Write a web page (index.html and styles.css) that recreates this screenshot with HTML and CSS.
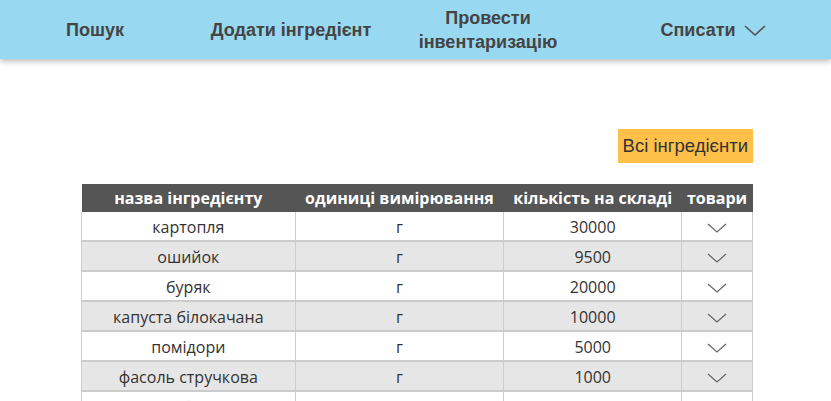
FILE: index.html
```html
<!DOCTYPE html>
<html lang="uk">
<head>
<meta charset="utf-8">
<link rel="stylesheet" href="styles.css">
</head>
<body>
<nav class="nav">
  <a class="nav-item i1">Пошук</a>
  <a class="nav-item i2">Додати інгредієнт</a>
  <a class="nav-item i3">Провести<br>інвентаризацію</a>
  <a class="nav-item i4">Списати
    <svg class="chev-nav" width="22" height="11" viewBox="0 0 22 11"><path d="M1 1 L11 10 L21 1" fill="none" stroke="#555" stroke-width="1.6"/></svg>
  </a>
</nav>
<main class="main">
  <div class="actions"><button class="btn">Всі інгредієнти</button></div>
  <table class="tbl">
    <colgroup><col class="c1"><col class="c2"><col class="c3"><col class="c4"></colgroup>
    <thead>
      <tr><th>назва інгредієнту</th><th>одиниці вимірювання</th><th>кількість на складі</th><th>товари</th></tr>
    </thead>
    <tbody>
      <tr><td>картопля</td><td>г</td><td>30000</td><td><svg class="chev" width="20" height="10" viewBox="0 0 20 10"><path d="M1 1 L10 9 L19 1" fill="none" stroke="#666" stroke-width="1.2"/></svg></td></tr>
      <tr><td>ошийок</td><td>г</td><td>9500</td><td><svg class="chev" width="20" height="10" viewBox="0 0 20 10"><path d="M1 1 L10 9 L19 1" fill="none" stroke="#666" stroke-width="1.2"/></svg></td></tr>
      <tr><td>буряк</td><td>г</td><td>20000</td><td><svg class="chev" width="20" height="10" viewBox="0 0 20 10"><path d="M1 1 L10 9 L19 1" fill="none" stroke="#666" stroke-width="1.2"/></svg></td></tr>
      <tr><td>капуста білокачана</td><td>г</td><td>10000</td><td><svg class="chev" width="20" height="10" viewBox="0 0 20 10"><path d="M1 1 L10 9 L19 1" fill="none" stroke="#666" stroke-width="1.2"/></svg></td></tr>
      <tr><td>помідори</td><td>г</td><td>5000</td><td><svg class="chev" width="20" height="10" viewBox="0 0 20 10"><path d="M1 1 L10 9 L19 1" fill="none" stroke="#666" stroke-width="1.2"/></svg></td></tr>
      <tr><td>фасоль стручкова</td><td>г</td><td>1000</td><td><svg class="chev" width="20" height="10" viewBox="0 0 20 10"><path d="M1 1 L10 9 L19 1" fill="none" stroke="#666" stroke-width="1.2"/></svg></td></tr>
      <tr><td>цибуля</td><td>г</td><td>3000</td><td><svg class="chev" width="20" height="10" viewBox="0 0 20 10"><path d="M1 1 L10 9 L19 1" fill="none" stroke="#666" stroke-width="1.2"/></svg></td></tr>
    </tbody>
  </table>
</main>
</body>
</html>
```
FILE: styles.css
```css
html, body {
  margin: 0;
  padding: 0;
  background: #fff;
}
body {
  font-family: "Liberation Sans", Arial, sans-serif;
  overflow: hidden;
}
.nav {
  height: 59px;
  background: #98d8f0;
  box-shadow: 0 2px 6px rgba(0,0,0,0.3);
  display: flex;
  align-items: center;
  padding-left: 20px;
  position: relative;
}
.nav-item {
  font-weight: bold;
  font-size: 18px;
  line-height: 24px;
  color: #444;
  display: flex;
  align-items: center;
  justify-content: center;
  text-align: center;
  gap: 6px;
}
.i1 { width: 150px; }
.i2 { width: 200px; margin-left: 21px; }
.i3 { width: 180px; margin-left: 7px; }
.i4 { width: 120px; margin-left: 75px; }
.chev-nav {
  margin-top: 1px;
  margin-left: 2px;
}
.main {
  width: 672px;
  margin: 0 auto;
  padding: 70px 0 0 3px;
}
.actions {
  display: flex;
  justify-content: flex-end;
  margin-bottom: 21px;
}
.btn {
  background: #ffc04a;
  border: none;
  font-family: "Liberation Sans", Arial, sans-serif;
  font-size: 18.5px;
  color: #333;
  height: 34px;
  padding: 0 5px;
}
.tbl {
  width: 672px;
  border-collapse: collapse;
  font-family: "Open Sans", sans-serif;
}
.c1 { width: 214px; }
.c2 { width: 209px; }
.c3 { width: 178px; }
.c4 { width: 71px; }
.tbl th {
  background: #555;
  color: #fff;
  font-weight: bold;
  height: 28px;
  padding: 0;
  font-size: 16px;
}
.tbl td {
  height: 27px;
  padding: 1px 0 0;
  text-align: center;
  color: #333;
  border-left: 1px solid #ccc;
  border-right: 1px solid #ccc;
  border-bottom: 2px solid #ccc;
  font-size: 16px;
  font-weight: 400;
}
.tbl tbody tr:nth-child(even) td {
  background: #e6e6e6;
}
.chev {
  display: block;
  margin: 3px auto 0;
}
```
